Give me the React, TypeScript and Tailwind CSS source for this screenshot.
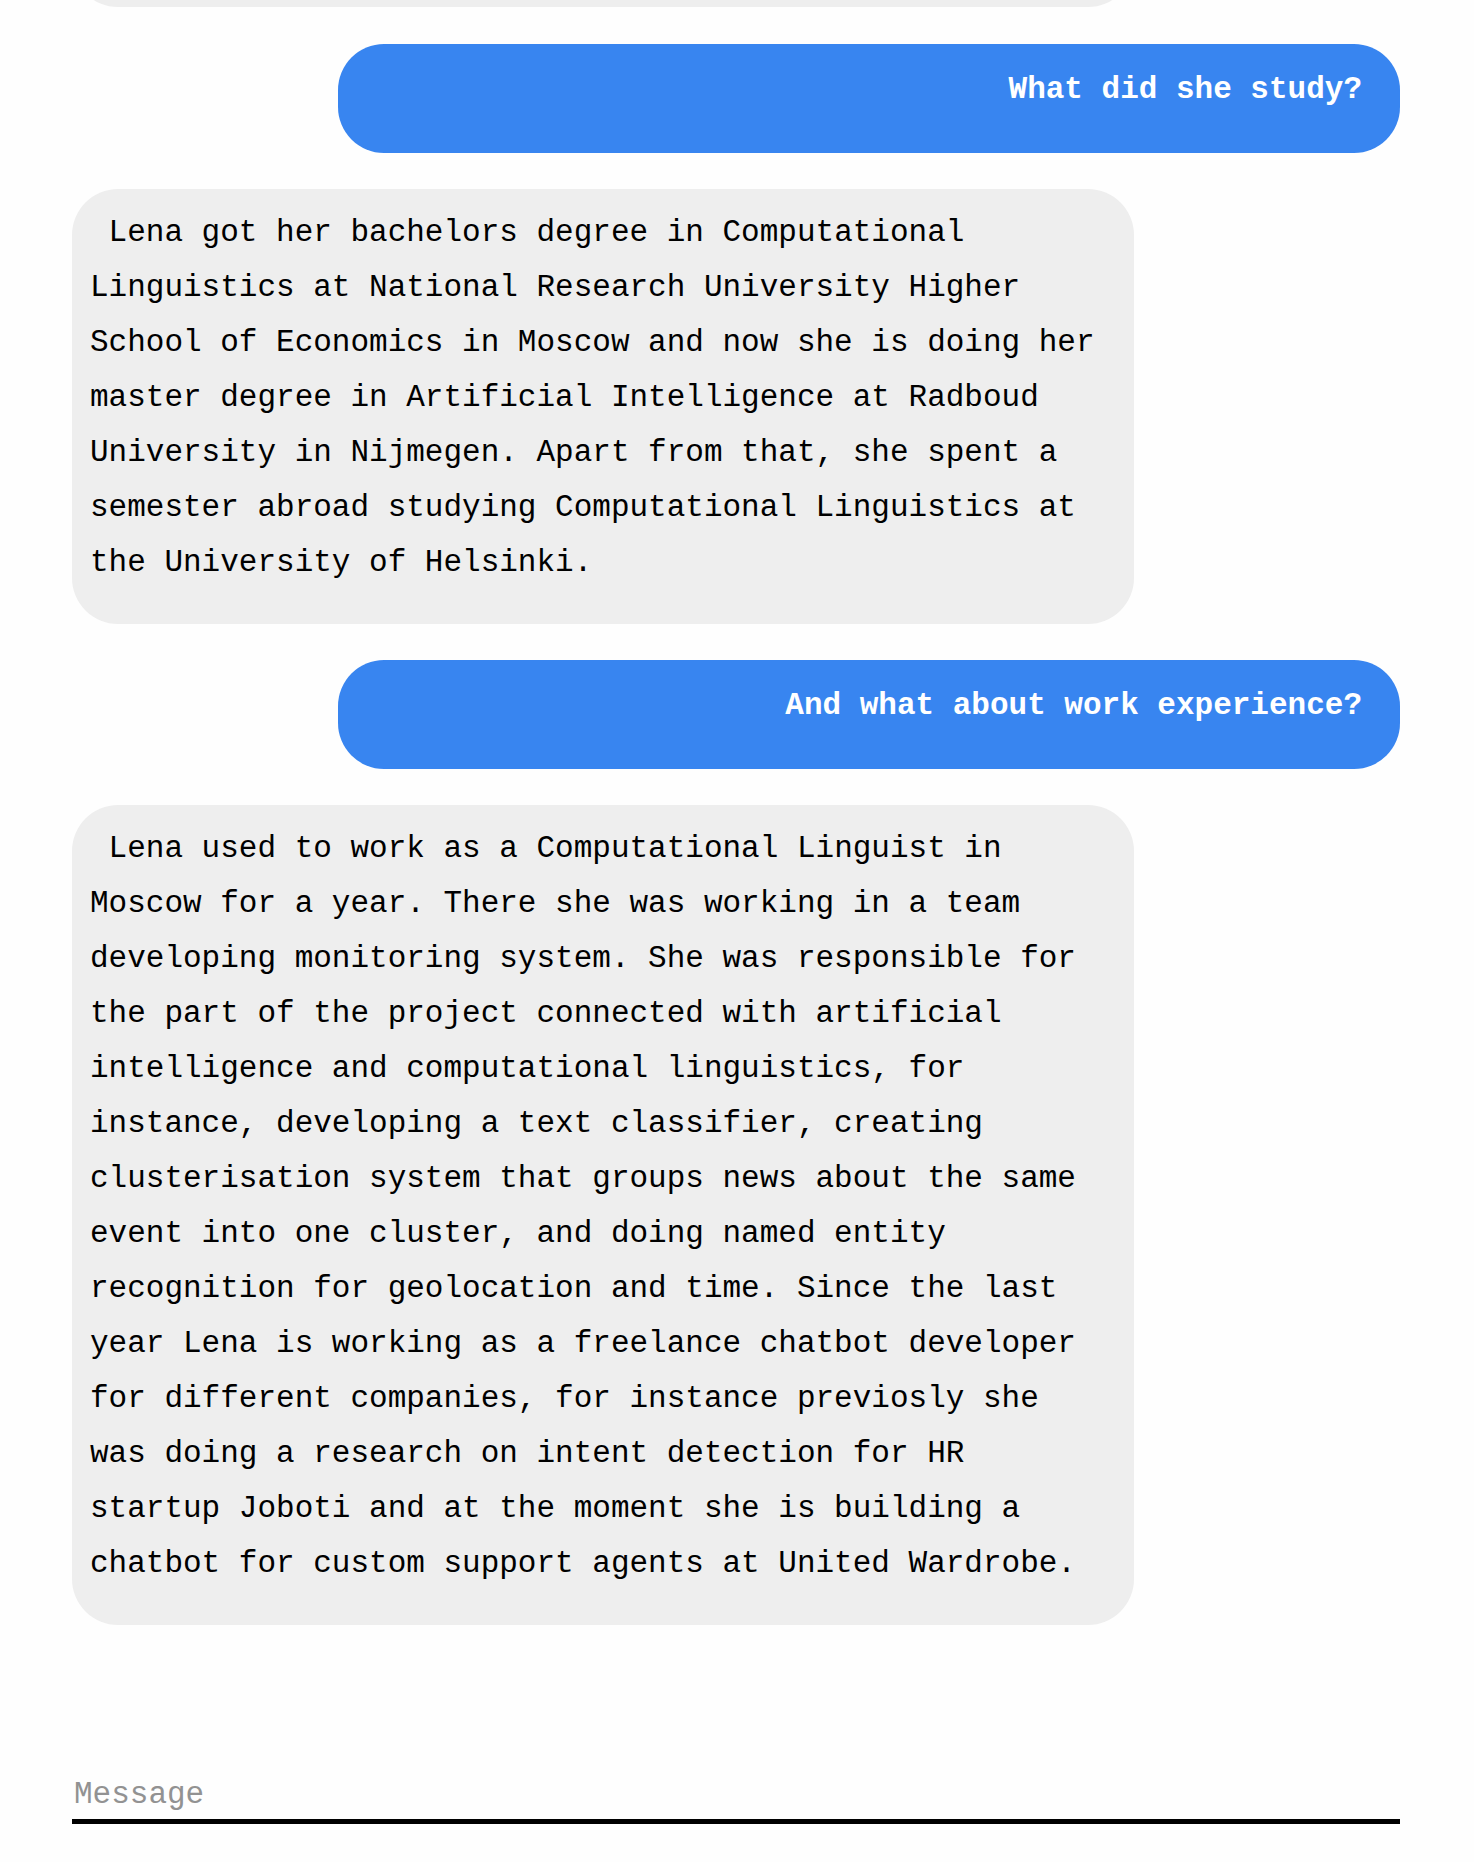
type Message = { from: "visitor" | "bot"; text: string };

const messages: Message[] = [
  { from: "visitor", text: "What did she study?" },
  {
    from: "bot",
    text: "Lena got her bachelors degree in Computational Linguistics at National Research University Higher School of Economics in Moscow and now she is doing her master degree in Artificial Intelligence at Radboud University in Nijmegen. Apart from that, she spent a semester abroad studying Computational Linguistics at the University of Helsinki.",
  },
  { from: "visitor", text: "And what about work experience?" },
  {
    from: "bot",
    text: "Lena used to work as a Computational Linguist in Moscow for a year. There she was working in a team developing monitoring system. She was responsible for the part of the project connected with artificial intelligence and computational linguistics, for instance, developing a text classifier, creating clusterisation system that groups news about the same event into one cluster, and doing named entity recognition for geolocation and time. Since the last year Lena is working as a freelance chatbot developer for different companies, for instance previosly she was doing a research on intent detection for HR startup Joboti and at the moment she is building a chatbot for custom support agents at United Wardrobe.",
  },
];

function Bubble({ from, text }: Message) {
  if (from === "visitor") {
    return (
      <li className="w-4/5 self-end rounded-[46px] bg-[#3885f0] pt-[18px] pr-[38px] pb-9 pl-[18px] text-right font-bold text-white">
        {text}
      </li>
    );
  }
  return (
    <li className="w-4/5 rounded-[46px] bg-[#eeeeee] pt-4 pr-9 pb-[34px] pl-[18px] text-black">
      {"\u00a0"}
      {text}
    </li>
  );
}

export default function App() {
  return (
    <main className="flex min-h-screen flex-col bg-[#fefefe] pr-[74px] pl-[72px] font-['Liberation_Mono',monospace] text-[31px] leading-[55px]">
      {/* Tail of the earlier message, scrolled out of view */}
      <div className="flex h-[7px] flex-col justify-end overflow-hidden" aria-hidden="true">
        <div className="h-28 w-4/5 shrink-0 rounded-[46px] bg-[#eeeeee]" />
      </div>
      <ul className="mt-[37px] flex flex-col gap-9">
        {messages.map((message) => (
          <Bubble key={message.text} {...message} />
        ))}
      </ul>
      <form className="mt-auto pb-[38px]" onSubmit={(event) => event.preventDefault()}>
        <input
          type="text"
          aria-label="Message"
          placeholder="Message"
          className="block h-[54px] w-full border-b-[5px] border-black bg-transparent px-0.5 text-black outline-none placeholder:text-[#929292]"
        />
      </form>
    </main>
  );
}
